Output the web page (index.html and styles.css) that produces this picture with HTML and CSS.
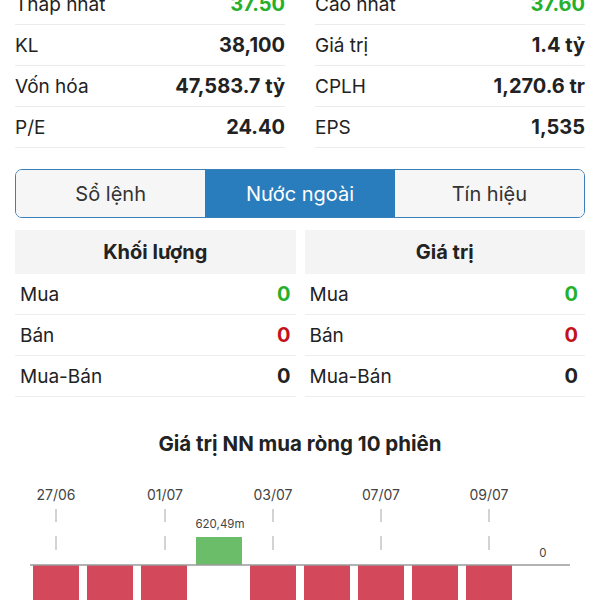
FILE: index.html
```html
<!DOCTYPE html>
<html lang="vi">
<head>
    <meta charset="UTF-8">
    <meta name="viewport" content="width=device-width, initial-scale=1.0">
    <title>Nước ngoài</title>
    <link rel="stylesheet" href="styles.css">
</head>
<body>
    <div class="stats">
        <div class="stat-col">
            <div class="stat-row"><span>Thấp nhất</span><b class="up">37.50</b></div>
            <div class="stat-row"><span>KL</span><b>38,100</b></div>
            <div class="stat-row"><span>Vốn hóa</span><b>47,583.7 tỷ</b></div>
            <div class="stat-row"><span>P/E</span><b>24.40</b></div>
        </div>
        <div class="stat-col">
            <div class="stat-row"><span>Cao nhất</span><b class="up">37.60</b></div>
            <div class="stat-row"><span>Giá trị</span><b>1.4 tỷ</b></div>
            <div class="stat-row"><span>CPLH</span><b>1,270.6 tr</b></div>
            <div class="stat-row"><span>EPS</span><b>1,535</b></div>
        </div>
    </div>

    <div class="tabs">
        <div class="tab">Sổ lệnh</div>
        <div class="tab active">Nước ngoài</div>
        <div class="tab">Tín hiệu</div>
    </div>

    <div class="foreign">
        <div class="ftable">
            <div class="fhead">Khối lượng</div>
            <div class="frow"><span>Mua</span><b class="up">0</b></div>
            <div class="frow"><span>Bán</span><b class="down">0</b></div>
            <div class="frow"><span>Mua-Bán</span><b>0</b></div>
        </div>
        <div class="ftable right">
            <div class="fhead">Giá trị</div>
            <div class="frow"><span>Mua</span><b class="up">0</b></div>
            <div class="frow"><span>Bán</span><b class="down">0</b></div>
            <div class="frow"><span>Mua-Bán</span><b>0</b></div>
        </div>
    </div>

    <div class="chart">
        <h2>Giá trị NN mua ròng 10 phiên</h2>
        <svg class="chart-svg" width="600" height="130" viewBox="0 470 600 130">
            <g class="dates">
                <text x="56" y="500">27/06</text>
                <text x="165" y="500">01/07</text>
                <text x="273" y="500">03/07</text>
                <text x="381" y="500">07/07</text>
                <text x="489" y="500">09/07</text>
            </g>
            <g class="ticks">
                <line x1="56" y1="509" x2="56" y2="522"/><line x1="56" y1="536" x2="56" y2="550"/>
                <line x1="165" y1="509" x2="165" y2="522"/><line x1="165" y1="536" x2="165" y2="550"/>
                <line x1="273" y1="509" x2="273" y2="522"/><line x1="273" y1="536" x2="273" y2="550"/>
                <line x1="381" y1="509" x2="381" y2="522"/><line x1="381" y1="536" x2="381" y2="550"/>
                <line x1="489" y1="509" x2="489" y2="522"/><line x1="489" y1="536" x2="489" y2="550"/>
            </g>
            <g class="bars-neg">
                <rect x="33" y="565" width="46" height="40"/>
                <rect x="87" y="565" width="46" height="40"/>
                <rect x="141" y="565" width="46" height="40"/>
                <rect x="250" y="565" width="46" height="40"/>
                <rect x="304" y="565" width="46" height="40"/>
                <rect x="358" y="565" width="46" height="40"/>
                <rect x="412" y="565" width="46" height="40"/>
                <rect x="466" y="565" width="46" height="40"/>
            </g>
            <rect class="bar-pos" x="196" y="537" width="46" height="28"/>
            <line class="baseline" x1="30" y1="565" x2="570" y2="565"/>
            <text class="val" x="220" y="528">620,49m</text>
            <text class="val" x="543" y="557">0</text>
        </svg>
    </div>
</body>
</html>
```

FILE: styles.css
```css
body {
    margin: 0;
    font-family: Inter, "Liberation Sans", sans-serif;
    color: #222;
    background: #fff;
    overflow: hidden;
}
.up { color: #25b02c; }
.down { color: #c3121c; }

.stats {
    display: grid;
    grid-template-columns: 1fr 1fr;
    gap: 30px;
    padding: 0 15px;
    margin-top: -16px;
}
.stat-row {
    display: flex;
    justify-content: space-between;
    align-items: center;
    height: 40px;
    border-bottom: 1px solid #ececec;
    font-size: 19px;
}
.stat-row b {
    font-weight: 700;
    font-size: 20px;
}

.tabs {
    display: flex;
    margin: 21px 15px 0;
    height: 47px;
    border: 1.5px solid #3b80b8;
    border-radius: 7px;
    overflow: hidden;
}
.tab {
    flex: 1;
    display: flex;
    align-items: center;
    justify-content: center;
    background: #f6f6f6;
    font-size: 20px;
    color: #333;
}
.tab.active {
    background: #2a7dbd;
    color: #fff;
}

.foreign {
    display: flex;
    gap: 9px;
    margin: 12px 15px 0;
}
.ftable {
    flex: 1;
}
.fhead {
    height: 44px;
    display: flex;
    align-items: center;
    justify-content: center;
    background: #f4f4f4;
    font-weight: 700;
    font-size: 20px;
}
.frow {
    display: flex;
    justify-content: space-between;
    align-items: center;
    height: 40px;
    padding: 0 5px;
    border-bottom: 1px solid #ededed;
    font-size: 19px;
}
.frow b {
    font-size: 20px;
}
.ftable.right .frow {
    padding: 0 7px 0 5px;
}

.chart h2 {
    margin: 35px 0 0;
    text-align: center;
    font-size: 20.5px;
    font-weight: 700;
    line-height: 24px;
}
.chart-svg {
    display: block;
    margin-top: 14px;
}
.dates text {
    font-size: 14px;
    fill: #444;
    text-anchor: middle;
}
.ticks line {
    stroke: #c4c4c4;
    stroke-width: 1.5;
}
.bars-neg rect {
    fill: #d3495b;
}
.bar-pos {
    fill: #6cbd6a;
}
.baseline {
    stroke: #9a9a9a;
    stroke-width: 1.5;
}
.val {
    font-size: 11.5px;
    fill: #444;
    text-anchor: middle;
}
```
